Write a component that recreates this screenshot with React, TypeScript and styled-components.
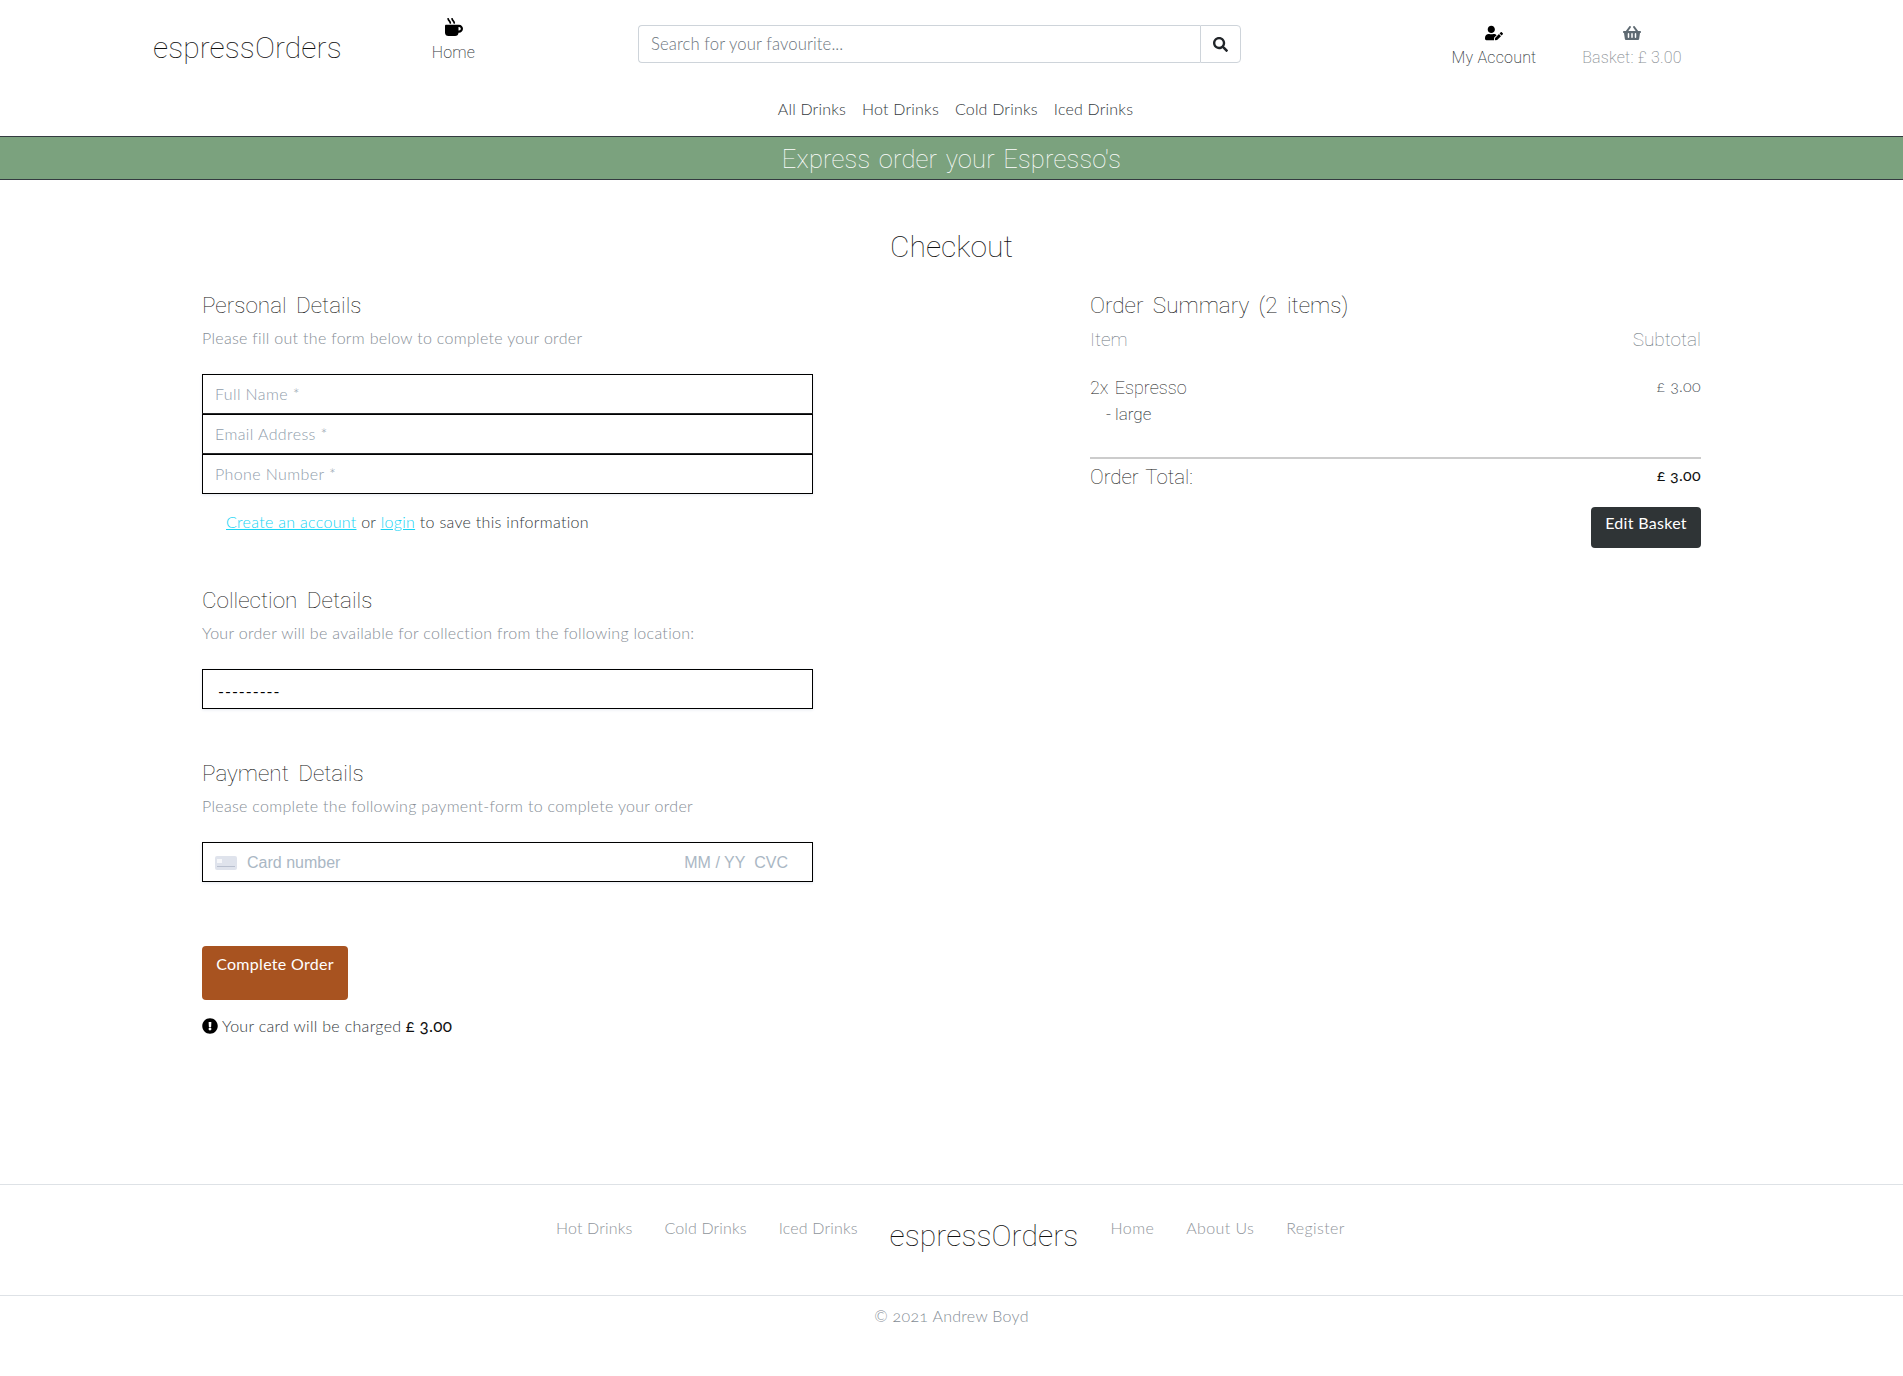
import React from "react";
import styled, { createGlobalStyle } from "styled-components";
import { FaMugHot, FaUserEdit, FaShoppingBasket, FaSearch, FaExclamationCircle } from "react-icons/fa";

const GlobalStyle = createGlobalStyle`
  * { box-sizing: border-box; }
  body {
    margin: 0;
    background: #fff;
    color: #343a40;
    font-family: "Lato", "Liberation Sans", sans-serif;
    font-weight: 300;
    font-size: 16px;
    letter-spacing: 0.3px;
  }
`;

const thin = `"Roboto", "Lato", sans-serif`;

const Page = styled.div`
  min-height: 1376px;
  display: flex;
  flex-direction: column;
`;

const Header = styled.header`
  height: 136px;
  display: flex;
  flex-direction: column;
`;

const TopRow = styled.div`
  height: 88px;
  display: flex;
  align-items: center;
  padding-left: 153px;
`;

const Logo = styled.a<{ $header?: boolean }>`
  font-family: ${thin};
  font-weight: 100;
  font-size: 30px;
  line-height: 40px;
  letter-spacing: 0.1px;
  width: 189px;
  white-space: nowrap;
  color: #111;
  ${(p) => p.$header && "margin-top: 8px;"}
`;

const NavIcon = styled.a<{ $width: number; $muted?: boolean; $offset?: number; $gap?: number }>`
  width: ${(p) => p.$width}px;
  display: flex;
  flex-direction: column;
  align-items: center;
  gap: ${(p) => p.$gap ?? 6}px;
  font-family: ${thin};
  font-weight: 200;
  font-size: 16px;
  letter-spacing: 0.2px;
  white-space: nowrap;
  color: ${(p) => (p.$muted ? "#8a8f94" : "#343a40")};
  margin-top: ${(p) => p.$offset ?? 0}px;
  svg {
    color: ${(p) => (p.$muted ? "#5f6a72" : "#000")};
    font-size: 18px;
  }
`;

const HomeSlot = styled.div`
  width: 296px;
  padding-left: 91px;
`;

const Search = styled.form`
  width: 603px;
  height: 38px;
  display: flex;
`;

const SearchInput = styled.input`
  flex: 1;
  min-width: 0;
  height: 100%;
  border: 1px solid #ced4da;
  border-right: 0;
  border-radius: 4px 0 0 4px;
  padding: 0 12px;
  font: 300 16.7px "Lato", sans-serif;
  letter-spacing: 0.1px;
  &::placeholder { color: #6c757d; opacity: 1; }
`;

const SearchButton = styled.button`
  width: 41px;
  height: 100%;
  border: 1px solid #ced4da;
  border-radius: 0 4px 4px 0;
  background: #fff;
  color: #212529;
  font-size: 15px;
  display: flex;
  align-items: center;
  justify-content: center;
`;

const RightNav = styled.div`
  display: flex;
  margin-left: 198px;
  margin-top: 2px;
`;

const SubNav = styled.nav`
  display: flex;
  justify-content: center;
  gap: 16px;
  font-size: 16px;
  letter-spacing: 0.2px;
  color: #343a40;
  padding: 11px 0 0 8px;
`;

const Band = styled.div`
  height: 44px;
  background: #7ba27e;
  border-top: 1px solid #343a40;
  border-bottom: 1px solid #343a40;
  color: #fff;
  font-family: ${thin};
  font-weight: 100;
  font-size: 25.5px;
  letter-spacing: 0.2px;
  word-spacing: 2px;
  text-align: center;
  line-height: 44px;
`;

const Title = styled.h1`
  margin: 47px 0 0;
  font-family: ${thin};
  font-weight: 100;
  font-size: 30px;
  letter-spacing: 0;
  line-height: 40px;
  text-align: center;
  color: #111;
`;

const Columns = styled.main`
  flex: 1;
  display: grid;
  grid-template-columns: 611px 611px;
  justify-content: space-between;
  padding: 22px 202px 0;
`;

const Section = styled.section`
  margin-bottom: 48px;
`;

const Heading = styled.h2`
  margin: 0;
  font-family: ${thin};
  font-weight: 100;
  font-size: 22.5px;
  letter-spacing: 0;
  word-spacing: 4px;
  line-height: 32px;
  color: #111;
`;

const Hint = styled.p`
  margin: 5px 0 24px;
  font-size: 16px;
  line-height: 24px;
  color: #868e96;
`;

const Fields = styled.div`
  display: flex;
  flex-direction: column;
`;

const Field = styled.input`
  height: 40px;
  border: 1px solid #000;
  padding: 0 12px 2px;
  font: 300 16px "Lato", sans-serif;
  letter-spacing: 0.4px;
  box-shadow: 0 1px 3px #e6ebf1;
  &::placeholder { color: #8f9dab; opacity: 1; }
`;

const SelectField = styled.select`
  height: 40px;
  width: 100%;
  border: 1px solid #000;
  padding: 3px 15px 0;
  background: #fff;
  appearance: none;
  color: #000;
  font: 400 16px "Lato", sans-serif;
  letter-spacing: 1px;
  box-shadow: 0 1px 3px #e6ebf1;
`;

const AccountNote = styled.p`
  margin: 16px 0 0 24px;
  padding-bottom: 2px;
  font-size: 16px;
  line-height: 24px;
  color: #343a40;
  a { color: #17d4f4; text-decoration: underline; }
`;

const CardField = styled.div`
  height: 40px;
  border: 1px solid #000;
  display: flex;
  align-items: center;
  padding: 2px 24px 0 12px;
  font-family: "Liberation Sans", sans-serif;
  font-size: 16px;
  font-weight: 400;
  letter-spacing: 0;
  color: #aab7c4;
  box-shadow: 0 1px 3px #e6ebf1;
`;

const CardNumber = styled.span`
  margin-left: 10px;
  flex: 1;
`;

const CardIcon = styled.svg`
  width: 22px;
  height: 14px;
`;

const CompleteButton = styled.button`
  width: 146px;
  height: 54px;
  margin-top: 64px;
  border: 0;
  border-radius: 4px;
  background: #a85320;
  color: #fff;
  font: 400 16px "Lato", sans-serif;
  letter-spacing: 0.3px;
  padding: 6px 0 0;
  display: block;
  text-align: center;
  line-height: 24px;
`;

const ButtonLabel = styled.span`
  display: block;
  height: 48px;
`;

const Charge = styled.p`
  margin: 14px 0 0;
  display: flex;
  align-items: center;
  gap: 4px;
  font-size: 16px;
  line-height: 24px;
  color: #343a40;
  svg { color: #000; font-size: 16px; }
  b { font-weight: 400; font-size: 17px; color: #111; font-variant-numeric: oldstyle-nums; }
`;

const SummaryRow = styled.div<{ $top?: number }>`
  display: flex;
  justify-content: space-between;
  align-items: center;
  line-height: 24px;
  margin-top: ${(p) => p.$top ?? 0}px;
`;

const ThinText = styled.span<{ $size?: number; $muted?: boolean }>`
  font-family: ${thin};
  font-weight: 100;
  font-size: ${(p) => p.$size ?? 18}px;
  letter-spacing: 0;
  word-spacing: 2px;
  color: ${(p) => (p.$muted ? "#6c757d" : "#111")};
`;

const Size = styled.div`
  margin: 4px 0 0 16px;
  font-family: ${thin};
  font-weight: 200;
  font-size: 17px;
  line-height: 20px;
  letter-spacing: 0;
  color: #343a40;
`;

const Price = styled.span<{ $strong?: boolean }>`
  margin-bottom: 4px;
  font-size: 16px;
  line-height: 20px;
  font-weight: ${(p) => (p.$strong ? 400 : 300)};
  font-variant-numeric: oldstyle-nums;
  color: ${(p) => (p.$strong ? "#111" : "#495057")};
`;

const Rule = styled.hr`
  margin: 33px 0 0;
  border: 0;
  border-top: 2px solid #ccc;
`;

const EditRow = styled.div`
  display: flex;
  justify-content: flex-end;
  margin-top: 18px;
`;

const EditButton = styled.a`
  width: 110px;
  height: 41px;
  border-radius: 4px;
  background: #2f3436;
  color: #fff;
  font-size: 16px;
  font-weight: 400;
  text-align: center;
  padding-top: 4px;
  line-height: 24px;
`;

const Footer = styled.footer`
  height: 192px;
  border-top: 1px solid #dee2e6;
`;

const FooterNav = styled.nav`
  height: 111px;
  border-bottom: 1px solid #dee2e6;
  display: flex;
  justify-content: center;
  align-items: flex-start;
  gap: 32px;
  padding: 31px 2px 0 0;
  font-size: 16px;
  line-height: 24px;
  color: #8f959b;
`;

const FooterLink = styled.a<{ $wide?: boolean }>`
  letter-spacing: ${(p) => (p.$wide ? 0.4 : 0.15)}px;
`;

const Copyright = styled.p`
  margin: 8px 0 0;
  text-align: center;
  font-size: 16px;
  line-height: 24px;
  font-variant-numeric: oldstyle-nums;
  color: #868e96;
`;

export default function App() {
  return (
    <Page>
      <GlobalStyle />
      <Header>
        <TopRow>
          <Logo $header>espressOrders</Logo>
          <HomeSlot>
            <NavIcon $width={41} $offset={-9} $gap={7}>
              <FaMugHot />
              Home
            </NavIcon>
          </HomeSlot>
          <Search>
            <SearchInput placeholder="Search for your favourite..." />
            <SearchButton type="button" aria-label="Search">
              <FaSearch />
            </SearchButton>
          </Search>
          <RightNav>
            <NavIcon $width={110}>
              <FaUserEdit />
              My Account
            </NavIcon>
            <NavIcon $width={166} $muted>
              <FaShoppingBasket />
              Basket: £ 3.00
            </NavIcon>
          </RightNav>
        </TopRow>
        <SubNav>
          <a>All Drinks</a>
          <a>Hot Drinks</a>
          <a>Cold Drinks</a>
          <a>Iced Drinks</a>
        </SubNav>
      </Header>
      <Band>Express order your Espresso's</Band>
      <Title>Checkout</Title>
      <Columns>
        <div>
          <Section>
            <Heading>Personal Details</Heading>
            <Hint>Please fill out the form below to complete your order</Hint>
            <Fields>
              <Field placeholder="Full Name *" />
              <Field placeholder="Email Address *" />
              <Field placeholder="Phone Number *" />
            </Fields>
            <AccountNote>
              <a>Create an account</a> or <a>login</a> to save this information
            </AccountNote>
          </Section>
          <Section>
            <Heading>Collection Details</Heading>
            <Hint>Your order will be available for collection from the following location:</Hint>
            <SelectField>
              <option>---------</option>
            </SelectField>
          </Section>
          <Section>
            <Heading>Payment Details</Heading>
            <Hint>Please complete the following payment-form to complete your order</Hint>
            <CardField>
              <CardIcon viewBox="0 0 22 14">
                <rect width="22" height="14" rx="2" fill="#dfe3ec" />
                <rect x="2" y="3" width="5" height="4" fill="#f6f7fa" />
                <rect x="2" y="10" width="18" height="1" fill="#b9c0cf" />
              </CardIcon>
              <CardNumber>Card number</CardNumber>
              MM / YY&nbsp;&nbsp;CVC
            </CardField>
          </Section>
          <CompleteButton type="button">
            <ButtonLabel>Complete Order</ButtonLabel>
          </CompleteButton>
          <Charge>
            <FaExclamationCircle />
            Your card will be charged <b>£ 3.00</b>
          </Charge>
        </div>
        <div>
          <Heading>Order Summary (2 items)</Heading>
          <SummaryRow $top={7}>
            <ThinText $muted $size={19}>Item</ThinText>
            <ThinText $muted $size={19}>Subtotal</ThinText>
          </SummaryRow>
          <SummaryRow $top={24}>
            <ThinText>2x Espresso</ThinText>
            <Price>£ 3.00</Price>
          </SummaryRow>
          <Size>- large</Size>
          <Rule />
          <SummaryRow $top={6}>
            <ThinText $size={20.5}>Order Total:</ThinText>
            <Price $strong>£ 3.00</Price>
          </SummaryRow>
          <EditRow>
            <EditButton>Edit Basket</EditButton>
          </EditRow>
        </div>
      </Columns>
      <Footer>
        <FooterNav>
          <FooterLink>Hot Drinks</FooterLink>
          <FooterLink>Cold Drinks</FooterLink>
          <FooterLink>Iced Drinks</FooterLink>
          <Logo>espressOrders</Logo>
          <FooterLink $wide>Home</FooterLink>
          <FooterLink $wide>About Us</FooterLink>
          <FooterLink $wide>Register</FooterLink>
        </FooterNav>
        <Copyright>© 2021 Andrew Boyd</Copyright>
      </Footer>
    </Page>
  );
}
